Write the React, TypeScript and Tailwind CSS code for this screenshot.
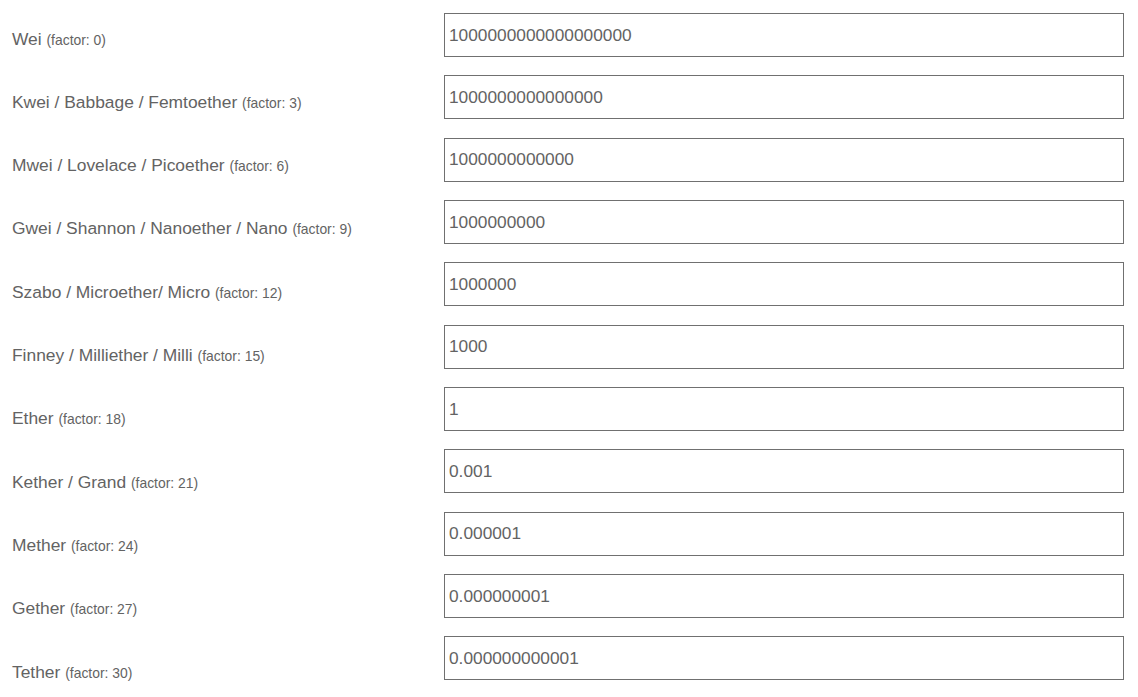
import React from 'react';

const units = [
  { label: 'Wei', factor: 0, value: '1000000000000000000' },
  { label: 'Kwei / Babbage / Femtoether', factor: 3, value: '1000000000000000' },
  { label: 'Mwei / Lovelace / Picoether', factor: 6, value: '1000000000000' },
  { label: 'Gwei / Shannon / Nanoether / Nano', factor: 9, value: '1000000000' },
  { label: 'Szabo / Microether/ Micro', factor: 12, value: '1000000' },
  { label: 'Finney / Milliether / Milli', factor: 15, value: '1000' },
  { label: 'Ether', factor: 18, value: '1' },
  { label: 'Kether / Grand', factor: 21, value: '0.001' },
  { label: 'Mether', factor: 24, value: '0.000001' },
  { label: 'Gether', factor: 27, value: '0.000000001' },
  { label: 'Tether', factor: 30, value: '0.000000000001' },
];

const font = { fontFamily: '"Liberation Sans", Arial, Helvetica, sans-serif' };

export default function App() {
  return (
    <div className="flex bg-white text-[#636363] text-[17.4px] w-[1138px] h-[697px] overflow-hidden" style={font}>
      <div className="w-[444px] pl-[12px] pt-[7px] flex flex-col">
        {units.map((u) => (
          <div key={u.label} className="h-[63.3px] flex items-center shrink-0">
            <span>
              {u.label} <span className="text-[13.9px]">(factor: {u.factor})</span>
            </span>
          </div>
        ))}
      </div>
      <div className="w-[680px] pt-[13px] flex flex-col gap-[18.35px]">
        {units.map((u) => (
          <input
            key={u.label}
            type="text"
            defaultValue={u.value}
            className="h-[44px] w-full shrink-0 border border-[#707070] pl-[4px] text-[17.3px] text-[#636363] outline-none"
            style={font}
          />
        ))}
      </div>
    </div>
  );
}
